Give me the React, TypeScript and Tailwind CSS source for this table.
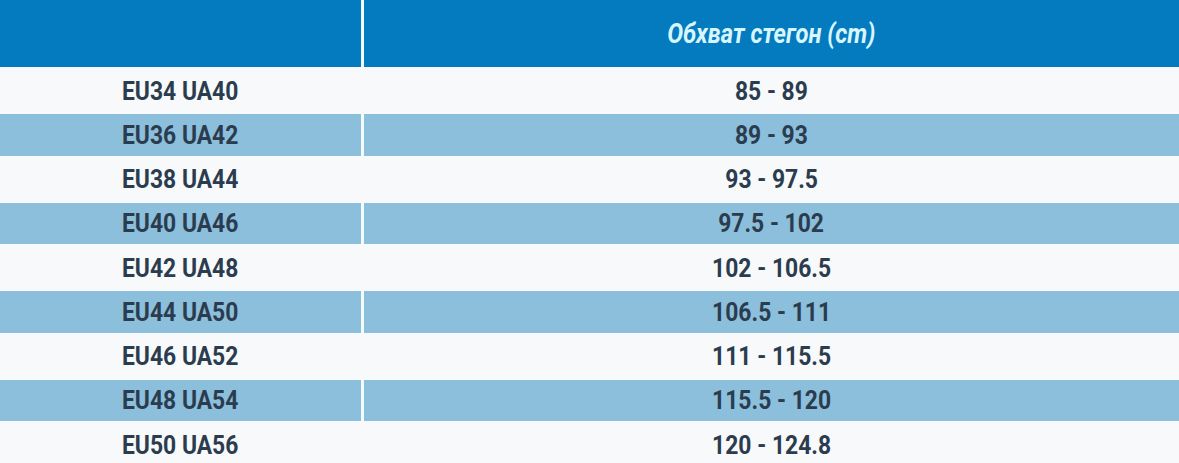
const rows: [string, string][] = [
  ['EU34 UA40', '85 - 89'],
  ['EU36 UA42', '89 - 93'],
  ['EU38 UA44', '93 - 97.5'],
  ['EU40 UA46', '97.5 - 102'],
  ['EU42 UA48', '102 - 106.5'],
  ['EU44 UA50', '106.5 - 111'],
  ['EU46 UA52', '111 - 115.5'],
  ['EU48 UA54', '115.5 - 120'],
  ['EU50 UA56', '120 - 124.8'],
]

// Roboto Condensed isn't available, so squeeze regular Roboto horizontally
export default function App() {
  return (
    <div className="w-[1179px] h-[463px] overflow-hidden bg-white font-['Roboto',sans-serif] font-bold text-[26px] leading-none text-[#2b3c4e]">
      {/* Header */}
      <div className="flex h-[67px] bg-[#057bbf]">
        <div className="w-[361px]" />
        <div className="w-[3px] bg-[#eefaff]" />
        <div className="flex-1 flex items-center justify-center pt-[1px] text-[27px] italic text-[#d7f6ff]">
          <span className="inline-block whitespace-nowrap scale-x-[0.88] origin-center">Обхват стегон (cm)</span>
        </div>
      </div>

      {rows.map(([size, range], i) => {
        const odd = i % 2 === 1
        return (
          <div key={size} className={odd ? 'flex h-[41.5px] bg-[#8bbfdc]' : 'flex h-[47px] bg-[#f7f9fb]'}>
            <div className="w-[361px] flex items-center pl-[122px]">
              <span className="inline-block whitespace-nowrap scale-x-[0.88] origin-left">{size}</span>
            </div>
            <div className={odd ? 'w-[3px] bg-[#f3fbff]' : 'w-[3px]'} />
            <div className="flex-1 flex items-center justify-center">
              <span className="inline-block whitespace-nowrap scale-x-[0.88] origin-center">{range}</span>
            </div>
          </div>
        )
      })}
    </div>
  )
}
